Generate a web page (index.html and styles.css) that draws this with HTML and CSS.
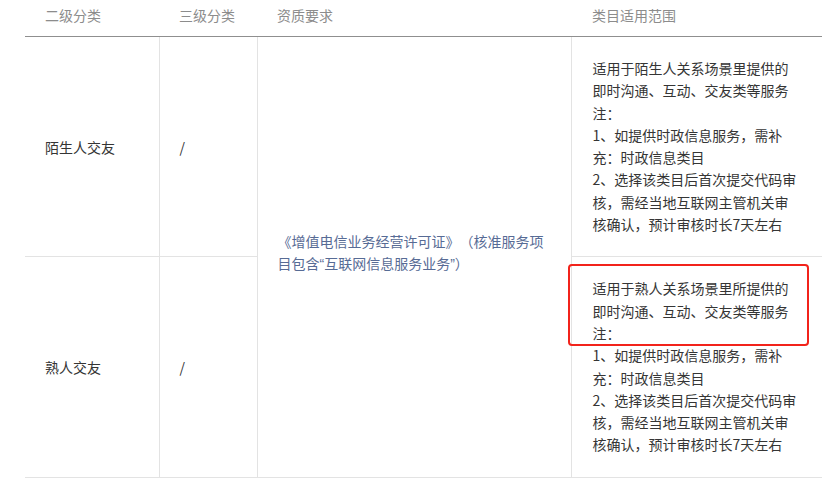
FILE: index.html
```html
<!DOCTYPE html>
<html lang="zh-CN">
<head>
<meta charset="utf-8">
<title>类目</title>
<link rel="stylesheet" href="styles.css">
</head>
<body>
<table class="cat-table">
  <colgroup>
    <col class="c1">
    <col class="c2">
    <col class="c3">
    <col class="c4">
  </colgroup>
  <thead>
    <tr>
      <th>二级分类</th>
      <th>三级分类</th>
      <th>资质要求</th>
      <th>类目适用范围</th>
    </tr>
  </thead>
  <tbody>
    <tr>
      <td class="mid">陌生人交友</td>
      <td class="mid">/</td>
      <td class="qual" rowspan="2">《增值电信业务经营许可证》（核准服务项目包含<span class="q">“</span>互联网信息服务业务<span class="q">”</span>）</td>
      <td class="scope">
        <div>适用于陌生人关系场景里提供的即时沟通、互动、交友类等服务</div>
        <div>注：</div>
        <div>1、如提供时政信息服务，需补充：时政信息类目</div>
        <div>2、选择该类目后首次提交代码审核，需经当地互联网主管机关审核确认，预计审核时长7天左右</div>
      </td>
    </tr>
    <tr>
      <td class="mid">熟人交友</td>
      <td class="mid">/</td>
      <td class="scope">
        <div class="scope-body">
          <div>适用于熟人关系场景里所提供的即时沟通、互动、交友类等服务</div>
          <div>注：</div>
          <div>1、如提供时政信息服务，需补充：时政信息类目</div>
          <div>2、选择该类目后首次提交代码审核，需经当地互联网主管机关审核确认，预计审核时长7天左右</div>
          <span class="highlight"></span>
        </div>
      </td>
    </tr>
  </tbody>
</table>
</body>
</html>
```

FILE: styles.css
```css
html, body {
  margin: 0;
  padding: 0;
  background: #ffffff;
}

body {
  font-family: "Noto Sans CJK SC", "Noto Sans", sans-serif;
  font-size: 14px;
  color: #353535;
  overflow: hidden;
  text-spacing-trim: space-all;
}

.cat-table {
  margin-left: 25px;
  width: 797px;
  border-collapse: collapse;
  table-layout: fixed;
}

.c1 { width: 134px; }
.c2 { width: 98px; }
.c3 { width: 314px; }
.c4 { width: 251px; }

.cat-table th {
  text-align: left;
  font-weight: normal;
  color: #8c8c8c;
  line-height: 22px;
  padding: 4px 20px 10px 20px;
  border-bottom: 1px solid #8f8f8f;
}

.cat-table th:nth-child(4) {
  padding-left: 21px;
}

.cat-table td {
  line-height: 22.3px;
  padding: 20px 20px 20px 20px;
  border-bottom: 1px solid #e3e3e3;
  border-right: 1px solid #e3e3e3;
  vertical-align: middle;
  word-break: break-all;
}

.cat-table td.scope {
  border-right: none;
  padding: 20px 22px 21px 21px;
  vertical-align: top;
}

.cat-table td.qual {
  color: #576b95;
  padding: 20px 20px 30px 20px;
}

.q {
  font-family: "Liberation Sans", sans-serif;
  line-height: 1;
}

.scope-body {
  position: relative;
}

.highlight {
  position: absolute;
  left: -25px;
  top: -13px;
  width: 241px;
  height: 82px;
  box-sizing: border-box;
  border: 2px solid #f2231b;
  border-radius: 4px;
}
```
